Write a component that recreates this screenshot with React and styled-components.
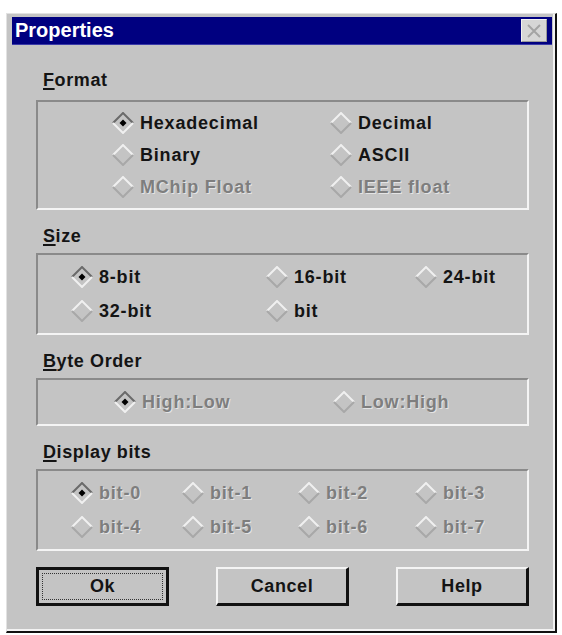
import React from 'react';
import styled, { createGlobalStyle } from 'styled-components';

const GlobalStyle = createGlobalStyle`
    body {
        margin: 0;
        background: #ffffff;
        font-family: "Liberation Sans", Arial, sans-serif;
    }
`;

const Page = styled.div`
    padding: 13px 0 0 6px;
`;

const Window = styled.div`
    box-sizing: border-box;
    width: 551px;
    height: 620px;
    background: #c4c4c4;
    border-top: 1px solid #e2e2e2;
    border-left: 1px solid #e2e2e2;
    border-right: 2px solid #111;
    border-bottom: 2px solid #111;
    box-shadow: inset -2px -2px 0 #f2f2f2;
    padding: 3px 3px 0 5px;
    display: flex;
    flex-direction: column;
`;

const TitleBar = styled.div`
    height: 28px;
    background: #000080;
    border-bottom: 1px solid #3a3aa8;
    box-sizing: border-box;
    display: flex;
    align-items: center;
    justify-content: space-between;
    padding: 0 5px 0 3px;
`;

const Title = styled.span`
    color: #fff;
    font-weight: bold;
    font-size: 20px;
`;

const CloseBox = styled.div`
    box-sizing: border-box;
    width: 26px;
    height: 23px;
    background: #d6d6d6;
    border-top: 1px solid #f0f0f0;
    border-left: 1px solid #f0f0f0;
    border-right: 1px solid #9a9a9a;
    border-bottom: 1px solid #9a9a9a;
    display: flex;
    align-items: center;
    justify-content: center;
`;

const Body = styled.div`
    padding: 23px 23px 0 24px;
    display: flex;
    flex-direction: column;
`;

const Section = styled.div`
    margin-bottom: 14px;
`;

const Label = styled.div`
    font-size: 18px;
    font-weight: bold;
    letter-spacing: 0.6px;
    line-height: 24px;
    color: #141414;
    padding-left: 7px;
    margin-bottom: ${p => p.$gap || 5}px;
    u { text-decoration-thickness: 2px; text-underline-offset: 2px; }
`;

const GroupBox = styled.div`
    border-top: 2px solid #8a8a8a;
    border-left: 2px solid #8a8a8a;
    border-bottom: 2px solid #f4f4f4;
    border-right: 2px solid #f4f4f4;
    padding: 5px 0 5px ${p => p.$left}px;
    display: grid;
    grid-template-columns: ${p => p.$cols};
    grid-auto-rows: ${p => p.$row}px;
`;

const Option = styled.div`
    display: flex;
    align-items: center;
    gap: 6px;
    font-size: 18px;
    font-weight: bold;
    letter-spacing: 0.8px;
    color: ${p => (p.$disabled ? '#7e7e7e' : '#141414')};
    text-shadow: ${p => (p.$disabled ? '1px 1px 0 #e4e4e4' : 'none')};
`;

const ButtonRow = styled.div`
    display: flex;
    justify-content: space-between;
    padding-top: 2px;
`;

const Button = styled.div`
    box-sizing: border-box;
    width: 133px;
    height: 39px;
    display: flex;
    align-items: center;
    justify-content: center;
    font-size: 18px;
    font-weight: bold;
    letter-spacing: 0.6px;
    color: #141414;
    background: #c4c4c4;
    border-top: 2px solid #f4f4f4;
    border-left: 2px solid #f4f4f4;
    border-right: 3px solid #111;
    border-bottom: 3px solid #111;
`;

const DefaultButton = styled(Button)`
    border: 3px solid #111;
    padding: 3px;
`;

const FocusRect = styled.div`
    flex: 1;
    align-self: stretch;
    display: flex;
    align-items: center;
    justify-content: center;
    border: 1px dotted #333;
`;

const Diamond = ({ checked }) => (
    <svg width="22" height="22" viewBox="0 0 22 22">
        <polygon points="11,1 21,11 11,21 1,11" fill="#c4c4c4" />
        <polyline points="1,11 11,1 21,11" fill="none" stroke={checked ? '#6a6a6a' : '#f0f0f0'} strokeWidth="2" />
        <polyline points="1,11 11,21 21,11" fill="none" stroke={checked ? '#f0f0f0' : '#a8a8a8'} strokeWidth="2" />
        {checked && <polygon points="11,7.5 14.5,11 11,14.5 7.5,11" fill="#000" />}
    </svg>
);

const Radio = ({ label, checked, disabled }) => (
    <Option $disabled={disabled}>
        <Diamond checked={checked} />
        <span>{label}</span>
    </Option>
);

const CloseIcon = () => (
    <svg width="16" height="14" viewBox="0 0 16 14">
        <path d="M2 1 L14 13 M14 1 L2 13" stroke="#a4a4a4" strokeWidth="2" />
    </svg>
);

const App = () => {
    return (
        <Page>
            <GlobalStyle />
            <Window>
                <TitleBar>
                    <Title>Properties</Title>
                    <CloseBox><CloseIcon /></CloseBox>
                </TitleBar>
                <Body>
                    <Section>
                        <Label $gap={8}><u>F</u>ormat</Label>
                        <GroupBox $left={74} $cols="218px 1fr" $row={32}>
                            <Radio label="Hexadecimal" checked />
                            <Radio label="Decimal" />
                            <Radio label="Binary" />
                            <Radio label="ASCII" />
                            <Radio label="MChip Float" disabled />
                            <Radio label="IEEE float" disabled />
                        </GroupBox>
                    </Section>
                    <Section>
                        <Label><u>S</u>ize</Label>
                        <GroupBox $left={33} $cols="195px 149px 1fr" $row={34}>
                            <Radio label="8-bit" checked />
                            <Radio label="16-bit" />
                            <Radio label="24-bit" />
                            <Radio label="32-bit" />
                            <Radio label="bit" />
                        </GroupBox>
                    </Section>
                    <Section>
                        <Label><u>B</u>yte Order</Label>
                        <GroupBox $left={76} $cols="219px 1fr" $row={34}>
                            <Radio label="High:Low" checked disabled />
                            <Radio label="Low:High" disabled />
                        </GroupBox>
                    </Section>
                    <Section>
                        <Label><u>D</u>isplay bits</Label>
                        <GroupBox $left={33} $cols="111px 116px 117px 1fr" $row={34}>
                            {[0, 1, 2, 3, 4, 5, 6, 7].map(n => (
                                <Radio key={n} label={`bit-${n}`} checked={n === 0} disabled />
                            ))}
                        </GroupBox>
                    </Section>
                    <ButtonRow>
                        <DefaultButton><FocusRect>Ok</FocusRect></DefaultButton>
                        <Button>Cancel</Button>
                        <Button>Help</Button>
                    </ButtonRow>
                </Body>
            </Window>
        </Page>
    );
};

export default App;
